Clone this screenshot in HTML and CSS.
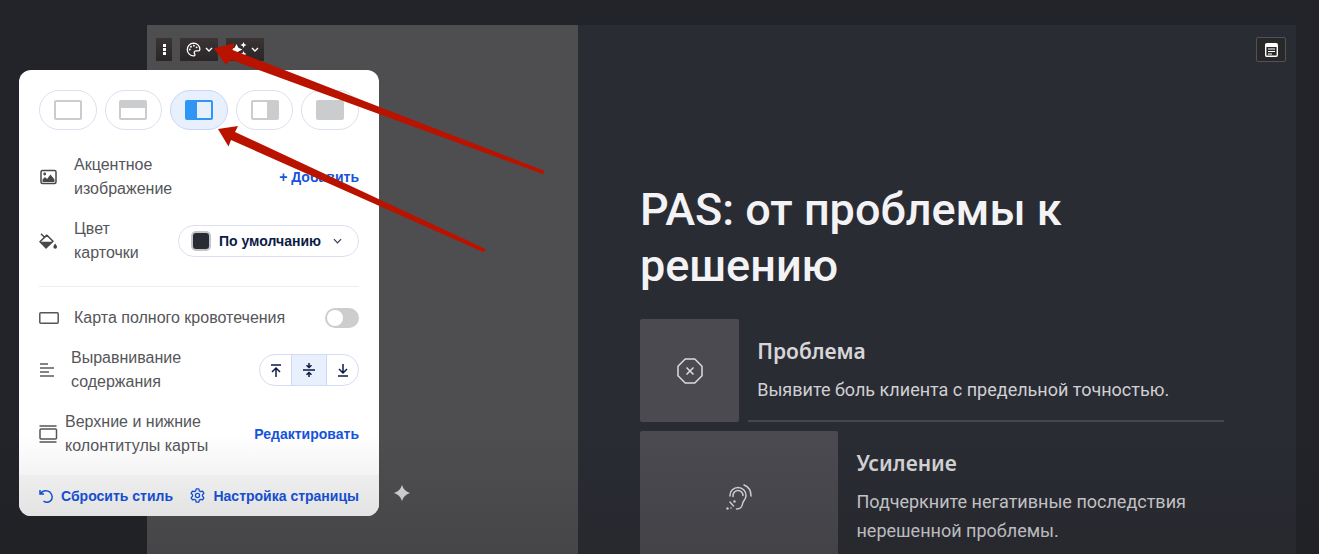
FILE: index.html
```html
<!DOCTYPE html>
<html lang="ru">
<head>
<meta charset="utf-8">
<meta name="viewport" content="width=device-width, initial-scale=1">
<title>PAS: от проблемы к решению</title>
<link rel="stylesheet" href="styles.css">
</head>
<body>
<main class="stage">
  <article class="card">
    <div class="accent">
      <div class="toolbar">
        <button class="tool" aria-label="Меню карточки">
          <svg width="3" height="11" viewBox="0 0 3 11" fill="#fff"><path d="M0 0h3v3H0zM0 4h3v3H0zM0 8h3v3H0z"/></svg>
        </button>
        <button class="tool tool-wide" aria-label="Стиль карточки">
          <svg width="15" height="15" viewBox="0 0 16 16" fill="none" stroke="#fff" stroke-width="1.4"><path d="M8 1.2A6.8 6.8 0 1 0 8.3 14.8C9.8 14.7 9.8 13.3 9.1 12.4 8.3 11.2 8.8 9.6 10.3 9.5H13.3C14.4 9.5 14.8 8.7 14.8 7.8 14.7 4 11.8 1.2 8 1.2z"/><g fill="#fff" stroke="none"><circle cx="4" cy="8" r="1"/><circle cx="5.3" cy="5" r="1"/><circle cx="8.4" cy="3.9" r="1"/><circle cx="11.3" cy="5.7" r="1"/></g></svg>
          <svg width="8" height="6" viewBox="0 0 8 6" fill="none" stroke="#fff" stroke-width="1.4"><path d="M1 1l3 3 3-3"/></svg>
        </button>
        <button class="tool tool-wide" aria-label="Улучшить с ИИ">
          <svg width="16" height="16" viewBox="0 0 16 16" fill="#fff"><path d="M5.500 2l1.900 3.800L11.500 7.500 7.400 9.400 5.500 13.500 3.600 9.400-.5 7.500l4.100-1.700zM12.500 0l.9 2.100 2.100.9-2.100.9-.9 2.100-.9-2.100L9.500 3l2.100-.9zM12.500 9l.9 2.100 2.100.9-2.100.9-.9 2.100-.9-2.100-2.100-.9 2.100-.9z"/></svg>
          <svg width="8" height="6" viewBox="0 0 8 6" fill="none" stroke="#fff" stroke-width="1.4"><path d="M1 1l3 3 3-3"/></svg>
        </button>
      </div>
    </div>

    <section class="content">
      <div class="content-top">
        <button class="notes" aria-label="Заметки">
          <svg width="13" height="14" viewBox="0 0 13 14"><rect x=".7" y=".7" width="11.600" height="12.600" rx="1.200" fill="none" stroke="#fff" stroke-width="1.400"/><path d="M1 1h11v3H1z" fill="#fff"/><path d="M3 6h7M3 8.500h7M3 11h4" stroke="#fff" stroke-width="1.200"/></svg>
        </button>
      </div>
      <div class="content-body">
        <h1 class="title">PAS: от проблемы к решению</h1>
        <div class="steps">
          <section class="step">
            <div class="step-box">
              <svg width="26" height="26" viewBox="0 0 26 26" fill="none" stroke="#dcdcde" stroke-width="1.500" stroke-linejoin="round"><path d="M8.200 1h9.600L25 8.200v9.600L17.800 25H8.200L1 17.800V8.200z"/><path d="M9.500 9.500l7 7M16.500 9.500l-7 7"/></svg>
            </div>
            <div class="step-text step-ruled">
              <h2 class="step-title">Проблема</h2>
              <p class="step-desc">Выявите боль клиента с предельной точностью.</p>
            </div>
          </section>
          <section class="step">
            <div class="step-box step-box-wide">
              <svg width="26" height="26" viewBox="0 0 26 26" fill="none" stroke="#dcdcde" stroke-width="1.500" stroke-linecap="round"><path d="M4 12v-.5a8 8 0 0 1 16 0c0 4-3 5-3.500 8.500-.4 3-2.500 5-6 5"/><path d="M7 12.500v-1a5 5 0 0 1 10 0M18 1c4 1.500 7 5.500 7 11"/><path d="M4 18l3.500 4" /><g fill="#dcdcde" stroke="none"><circle cx="1.500" cy="24.500" r="1.200"/><circle cx="8.500" cy="17.500" r="1.200"/><circle cx="5" cy="24" r=".8"/></g></svg>
            </div>
            <div class="step-text">
              <h2 class="step-title">Усиление</h2>
              <p class="step-desc">Подчеркните негативные последствия нерешенной проблемы.</p>
            </div>
          </section>
        </div>
      </div>
    </section>
  </article>

  <svg class="spark" width="16" height="16" viewBox="0 0 16 16" fill="#d8d8da"><path d="M8 0Q9.800 6.200 16 8 9.800 9.800 8 16 6.200 9.800 0 8 6.200 6.200 8 0z"/></svg>

  <aside class="panel" aria-label="Стиль карточки">
    <div class="panel-main">
      <div class="layouts">
        <button class="layout" aria-label="Без изображения"><span class="thumb"></span></button>
        <button class="layout" aria-label="Сверху"><span class="thumb thumb-top"></span></button>
        <button class="layout layout-on" aria-label="Слева" aria-pressed="true"><span class="thumb thumb-left"></span></button>
        <button class="layout" aria-label="Справа"><span class="thumb thumb-right"></span></button>
        <button class="layout" aria-label="Фон"><span class="thumb thumb-full"></span></button>
      </div>

      <div class="row">
        <span class="row-icon"><svg width="18" height="16" viewBox="0 0 18 16"><rect x="2" y="1.500" width="15" height="13" rx="1.500" fill="none" stroke="#484848" stroke-width="1.500"/><path d="M3.500 13V10.500L6 8l2 2 3.500-4.500 4 5V13z" fill="#484848"/><circle cx="5.700" cy="5" r="1.400" fill="#484848"/></svg></span>
        <span class="row-label row-label-image">Акцентное изображение</span>
        <button class="action">+ Добавить</button>
      </div>

      <div class="row">
        <span class="row-icon"><svg width="18" height="17" viewBox="0 0 18 17"><path d="M2 .8l4.200 4.200M7.500 2.200L1 8.700l6 6 7-6.500-6-6z" fill="none" stroke="#484848" stroke-width="1.500" stroke-linejoin="round"/><path d="M1 8.700h13l-7 7z" fill="#484848"/><path d="M16.200 10.500q1.800 2.300 1.800 3.500a1.800 1.800 0 0 1-3.600 0q0-1.200 1.800-3.500z" fill="#484848"/></svg></span>
        <label class="row-label row-label-color" for="card-color">Цвет карточки</label>
        <span class="picker">
          <span class="swatch"></span>
          <select class="picker-select" id="card-color"><option>По умолчанию</option></select>
          <svg class="picker-arrow" width="9" height="6" viewBox="0 0 10 6" fill="none" stroke="#33384f" stroke-width="1.300"><path d="M1 1l4 4 4-4"/></svg>
        </span>
      </div>

      <hr class="divider">

      <div class="row">
        <span class="row-icon"><svg width="20" height="12" viewBox="0 0 20 12"><rect x=".8" y=".8" width="18.400" height="10.400" rx="1" fill="none" stroke="#555" stroke-width="1.500"/></svg></span>
        <label class="row-label" for="full-bleed">Карта полного кровотечения</label>
        <input class="switch" type="checkbox" id="full-bleed">
      </div>

      <div class="row">
        <span class="row-icon row-icon-mid"><svg width="15" height="14" viewBox="0 0 15 14" stroke="#5c5c5c" stroke-width="1.600"><path d="M1 1h8M1 5h14M1 9h9M1 13h14"/></svg></span>
        <span class="row-label row-label-align">Выравнивание содержания</span>
        <span class="segments">
          <button class="segment" aria-label="По верху"><svg width="12" height="13" viewBox="0 0 12 13" fill="none" stroke="#0b1b45" stroke-width="1.500"><path d="M1 1h10M6 13V4M2 8l4-4 4 4"/></svg></button>
          <button class="segment segment-on" aria-label="По центру" aria-pressed="true"><svg width="12" height="14" viewBox="0 0 12 14" fill="none" stroke="#0b1b45" stroke-width="1.500"><path d="M0 7h12M6 0v4M3.500 2.200L6 4.500l2.500-2.300M6 14v-4M3.500 11.800L6 9.500l2.500 2.300"/></svg></button>
          <button class="segment" aria-label="По низу"><svg width="12" height="13" viewBox="0 0 12 13" fill="none" stroke="#0b1b45" stroke-width="1.500"><path d="M1 12h10M6 0v9M2 5l4 4 4-4"/></svg></button>
        </span>
      </div>

      <div class="row">
        <span class="row-icon row-icon-tight"><svg width="19" height="18" viewBox="0 0 19 18" fill="none" stroke="#555" stroke-width="1.500"><path d="M.5 1h17M.5 17h17"/><rect x="1" y="4" width="16.500" height="10" rx="1"/></svg></span>
        <span class="row-label row-label-wide">Верхние и нижние колонтитулы карты</span>
        <button class="action">Редактировать</button>
      </div>
    </div>

    <div class="panel-foot">
      <button class="action action-icon">
        <svg width="14" height="14" viewBox="0 0 14 14" fill="none" stroke="#1553dd" stroke-width="1.500"><path d="M1 1v4h4M1.300 4.800C3.500 1.300 8 .7 11 3.200c3 2.800 2.800 6.800.2 8.900-1.800 1.400-4.700 1.400-6.700 0"/></svg>
        Сбросить стиль
      </button>
      <button class="action action-icon">
        <svg width="15" height="15" viewBox="0 0 16 16" fill="none" stroke="#1553dd" stroke-width="1.400" stroke-linejoin="round"><path d="M6.600 1h2.800l.5 2 1.500.9 2-.6 1.400 2.400L13.300 7.200v1.600l1.500 1.500-1.400 2.400-2-.6-1.500.9-.5 2H6.600l-.5-2-1.500-.9-2 .6-1.400-2.400 1.500-1.500V7.200L1.200 5.700l1.400-2.400 2 .6L6.100 3z"/><circle cx="8" cy="8" r="2.200"/></svg>
        Настройка страницы
      </button>
    </div>
  </aside>

  <svg class="arrows" width="340" height="220" viewBox="210 40 340 220" fill="#b91300" aria-hidden="true">
    <path d="M214 48.500L234.500 43 232.500 50 543.500 170.500A2 2 0 0 1 542.500 174L231.500 60 225.500 64.500z"/>
    <path d="M218 129L238 126 235 132 484.500 248.500A2 2 0 0 1 483 252L231 140 228.500 146.500z"/>
  </svg>
</main>
</body>
</html>
```

FILE: styles.css
```css
* {
  box-sizing: border-box;
}

body {
  margin: 0;
  background: #232429;
  font-family: "Liberation Sans", Arial, sans-serif;
}

button {
  padding: 0;
  border: 0;
  background: none;
  font: inherit;
  cursor: pointer;
}

svg {
  display: block;
  flex: none;
}

.stage {
  position: relative;
  display: flex;
  height: 100vh;
  padding: 25px 23px 0 147px;
  overflow: hidden;
}

.stage::after {
  content: "";
  position: absolute;
  inset: auto 0 0;
  height: 120px;
  background: linear-gradient(transparent, rgba(20, 20, 20, 0.14));
  pointer-events: none;
}

.card {
  flex: 1;
  display: grid;
  grid-template-columns: 3fr 5fr;
  background: #2a2c33;
}

.accent {
  background: #4e4d50;
}

/* Card toolbar */

.toolbar {
  display: flex;
  gap: 8px;
  padding: 13px 9px;
}

.tool {
  display: flex;
  align-items: center;
  justify-content: center;
  gap: 4px;
  width: 16px;
  height: 23px;
  background: linear-gradient(#3a3435, #2a2526);
}

.tool-wide {
  width: 38px;
}

.notes {
  display: flex;
  align-items: center;
  justify-content: center;
  width: 30px;
  height: 25px;
  border: 1px solid #505257;
  border-radius: 2px;
  background: #282828;
}

/* Card content */

.content-top {
  display: flex;
  justify-content: flex-end;
  padding: 12px 10px 0;
}

.content-body {
  padding: 120px 72px 0 62px;
}

.title {
  margin: 0 0 25px;
  color: #f3f3f6;
  font: 500 45px/56px Roboto, sans-serif;
}

.steps {
  display: flex;
  flex-direction: column;
  gap: 9px;
}

.step {
  display: flex;
}

.step-box {
  flex: none;
  display: flex;
  align-items: center;
  justify-content: center;
  width: 17%;
  border-radius: 2px;
  background: #4a4a50;
}

.step-box-wide {
  width: 34%;
}

.step-text {
  flex: 1;
  margin-left: 9px;
  padding: 18px 0 18px 9px;
}

.step-ruled {
  padding-bottom: 16px;
  border-bottom: 2px solid #46474a;
}

.step-title {
  margin: 0 0 10px;
  color: #d6d6d9;
  font: 600 21px/28px "Noto Sans", sans-serif;
}

.step-desc {
  margin: 0;
  color: #d0d0d3;
  font: 400 18px/29px Roboto, sans-serif;
}

/* Style panel */

.spark {
  position: absolute;
  top: 485px;
  left: 394px;
}

.panel {
  position: absolute;
  top: 70px;
  left: 19px;
  width: 360px;
  border-radius: 12px;
  background: #fff;
  overflow: hidden;
}

.panel-main {
  display: flex;
  flex-direction: column;
  gap: 16px;
  padding: 20px 20px 17px;
}

.layouts {
  display: grid;
  grid-template-columns: repeat(5, 1fr);
  gap: 8px;
  margin-bottom: 7px;
}

.layout {
  display: flex;
  align-items: center;
  justify-content: center;
  height: 40px;
  border: 1px solid #dcdff0;
  border-radius: 20px;
}

.layout-on {
  border-color: #c9d5f4;
  background: #e8effd;
}

.thumb {
  width: 28px;
  height: 20px;
  border: 2px solid #cbcccd;
  border-radius: 2px;
}

.thumb-top {
  border-top-width: 8px;
}

.thumb-left {
  border-color: #2f96f5;
  border-left-width: 12px;
}

.thumb-right {
  border-right-width: 12px;
}

.thumb-full {
  background: #cbcccd;
}

.row {
  display: flex;
  align-items: center;
}

.row-icon {
  flex: none;
  width: 35px;
}

.row-icon-mid {
  width: 32px;
}

.row-icon-tight {
  width: 26px;
}

.row-label {
  color: #55565a;
  font-size: 16px;
  line-height: 24px;
}

.row-label-image,
.row-label-align {
  width: 120px;
}

.row-label-color {
  width: 80px;
}

.row-label-wide {
  width: 160px;
}

.action {
  margin-left: auto;
  color: #1553dd;
  font-size: 14px;
  font-weight: 700;
  line-height: 20px;
  white-space: nowrap;
}

.picker {
  position: relative;
  display: flex;
  align-items: center;
  gap: 8px;
  width: 181px;
  height: 32px;
  margin-left: auto;
  padding: 0 16px 0 12px;
  border: 1px solid #dcdff0;
  border-radius: 16px;
}

.swatch {
  flex: none;
  width: 20px;
  height: 20px;
  border: 2px solid #c4c5c8;
  border-radius: 5px;
  background: #2a2c33;
}

.picker-select {
  flex: 1;
  min-width: 0;
  padding: 0;
  border: 0;
  appearance: none;
  background: none;
  color: #0b1b45;
  font: 700 14px/20px "Liberation Sans", Arial, sans-serif;
}

.picker-arrow {
  pointer-events: none;
}

.divider {
  width: 100%;
  height: 1px;
  margin: 5px 0 3px;
  border: 0;
  background: #ededf0;
}

.switch {
  appearance: none;
  width: 34px;
  height: 20px;
  margin: 2px 0 2px auto;
  padding: 2px;
  border-radius: 10px;
  background: #cdcdcd;
}

.switch::before {
  content: "";
  display: block;
  width: 16px;
  height: 16px;
  border-radius: 50%;
  background: #fff;
}

.switch:checked {
  padding-left: 16px;
  background: #2f96f5;
}

.segments {
  display: grid;
  grid-template-columns: 31px 36px 31px;
  height: 32px;
  margin-left: auto;
  border: 1px solid #d5dcf5;
  border-radius: 16px;
  overflow: hidden;
}

.segment {
  display: flex;
  align-items: center;
  justify-content: center;
}

.segment-on {
  border: solid #cbd9fa;
  border-width: 0 1px;
  background: #e8effd;
}

.panel-foot {
  display: flex;
  align-items: center;
  justify-content: space-between;
  height: 41px;
  padding: 0 20px;
  background: #f9f9f9;
}

.action-icon {
  display: flex;
  align-items: center;
  gap: 8px;
  margin-left: 0;
}

/* Pointer arrows */

.arrows {
  position: absolute;
  top: 40px;
  left: 210px;
  pointer-events: none;
}
```
